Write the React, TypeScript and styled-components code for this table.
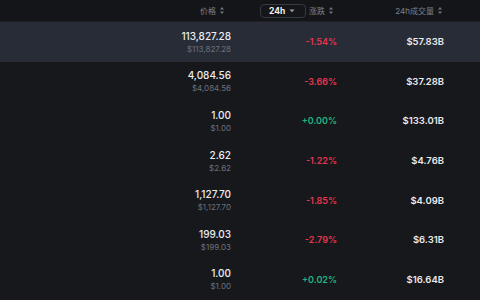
import React from 'react';
import styled, { createGlobalStyle } from 'styled-components';

const GlobalStyle = createGlobalStyle`
  html, body {
    margin: 0;
    padding: 0;
    background: #17181c;
  }
  body {
    font-family: Inter, "Noto Sans", "Noto Sans CJK SC", sans-serif;
  }
`;

interface Coin {
  price: string;
  change: string;
  volume: string;
}

const coins: Coin[] = [
  { price: '113,827.28', change: '-1.54%', volume: '$57.83B' },
  { price: '4,084.56', change: '-3.66%', volume: '$37.28B' },
  { price: '1.00', change: '+0.00%', volume: '$133.01B' },
  { price: '2.62', change: '-1.22%', volume: '$4.76B' },
  { price: '1,127.70', change: '-1.85%', volume: '$4.09B' },
  { price: '199.03', change: '-2.79%', volume: '$6.31B' },
  { price: '1.00', change: '+0.02%', volume: '$16.64B' },
];

const SortIcon = () => (
  <svg width='4' height='7' viewBox='0 0 4 7'>
    <path d='M2 0 L4 2.6 H0 Z' fill='#6f7480' />
    <path d='M2 7 L4 4.4 H0 Z' fill='#6f7480' />
  </svg>
);

const App: React.FC = () => {
  return (
    <Table>
      <GlobalStyle />
      <HeaderRow>
        <span />
        <HeadCell $pad={7}>
          价格 <SortIcon />
        </HeadCell>
        <HeadCell $pad={4}>
          <PeriodButton>
            <span>24h</span>
            <svg width='6' height='4' viewBox='0 0 6 4'>
              <path d='M0.5 0.5 H5.5 L3 3.2 Z' fill='#9aa0ab' />
            </svg>
          </PeriodButton>
          <HeadLabel>
            涨跌 <SortIcon />
          </HeadLabel>
        </HeadCell>
        <HeadCell $pad={2}>
          24h成交量 <SortIcon />
        </HeadCell>
        <span />
      </HeaderRow>
      {coins.map((c, i) => (
        <Row key={i} $active={i === 0}>
          <span />
          <PriceCell>
            <Price>{c.price}</Price>
            <SubPrice>${c.price}</SubPrice>
          </PriceCell>
          <Change $up={c.change.startsWith('+')}>{c.change}</Change>
          <Volume>{c.volume}</Volume>
          <span />
        </Row>
      ))}
    </Table>
  );
};

const Table = styled.div`
  width: 480px;
  height: 300px;
  overflow: hidden;
  background: #17181c;
`;

const grid = `
  display: grid;
  grid-template-columns: 131px 100px 106px 107px 36px;
  align-items: center;
`;

const HeaderRow = styled.div`
  ${grid}
  height: 22px;
  background: #141519;
  border-bottom: 1px solid #1f2127;
  box-sizing: border-box;
`;

const HeadCell = styled.div<{ $pad: number }>`
  display: flex;
  justify-content: flex-end;
  align-items: center;
  gap: 4px;
  padding-right: ${(p) => p.$pad}px;
  font-size: 8px;
  color: #7d828c;
  white-space: nowrap;
`;

const HeadLabel = styled.span`
  display: flex;
  align-items: center;
  gap: 4px;
`;

const PeriodButton = styled.div`
  display: flex;
  align-items: center;
  justify-content: space-between;
  box-sizing: border-box;
  width: 46px;
  height: 14px;
  margin-right: -1px;
  padding: 0 10px 0 8px;
  border: 1px solid #353a45;
  border-radius: 4px;
  background: #15161a;
  color: #f1f2f4;
  font-size: 8.5px;
  font-weight: 700;
`;

const Row = styled.div<{ $active: boolean }>`
  ${grid}
  height: 39.6px;
  background: ${(p) => (p.$active ? '#272c37' : 'transparent')};
`;

const PriceCell = styled.div`
  display: flex;
  flex-direction: column;
  align-items: flex-end;
  gap: 3px;
`;

const Price = styled.div`
  font-size: 10px;
  font-weight: 500;
  color: #eceef1;
  line-height: 12px;
`;

const SubPrice = styled.div`
  font-size: 8px;
  color: #6c717c;
  line-height: 9px;
`;

const Change = styled.div<{ $up: boolean }>`
  text-align: right;
  font-size: 9px;
  font-weight: 600;
  color: ${(p) => (p.$up ? '#22b37c' : '#e5364f')};
`;

const Volume = styled.div`
  text-align: right;
  font-size: 9.5px;
  font-weight: 600;
  color: #e9eaed;
`;

export default App;
